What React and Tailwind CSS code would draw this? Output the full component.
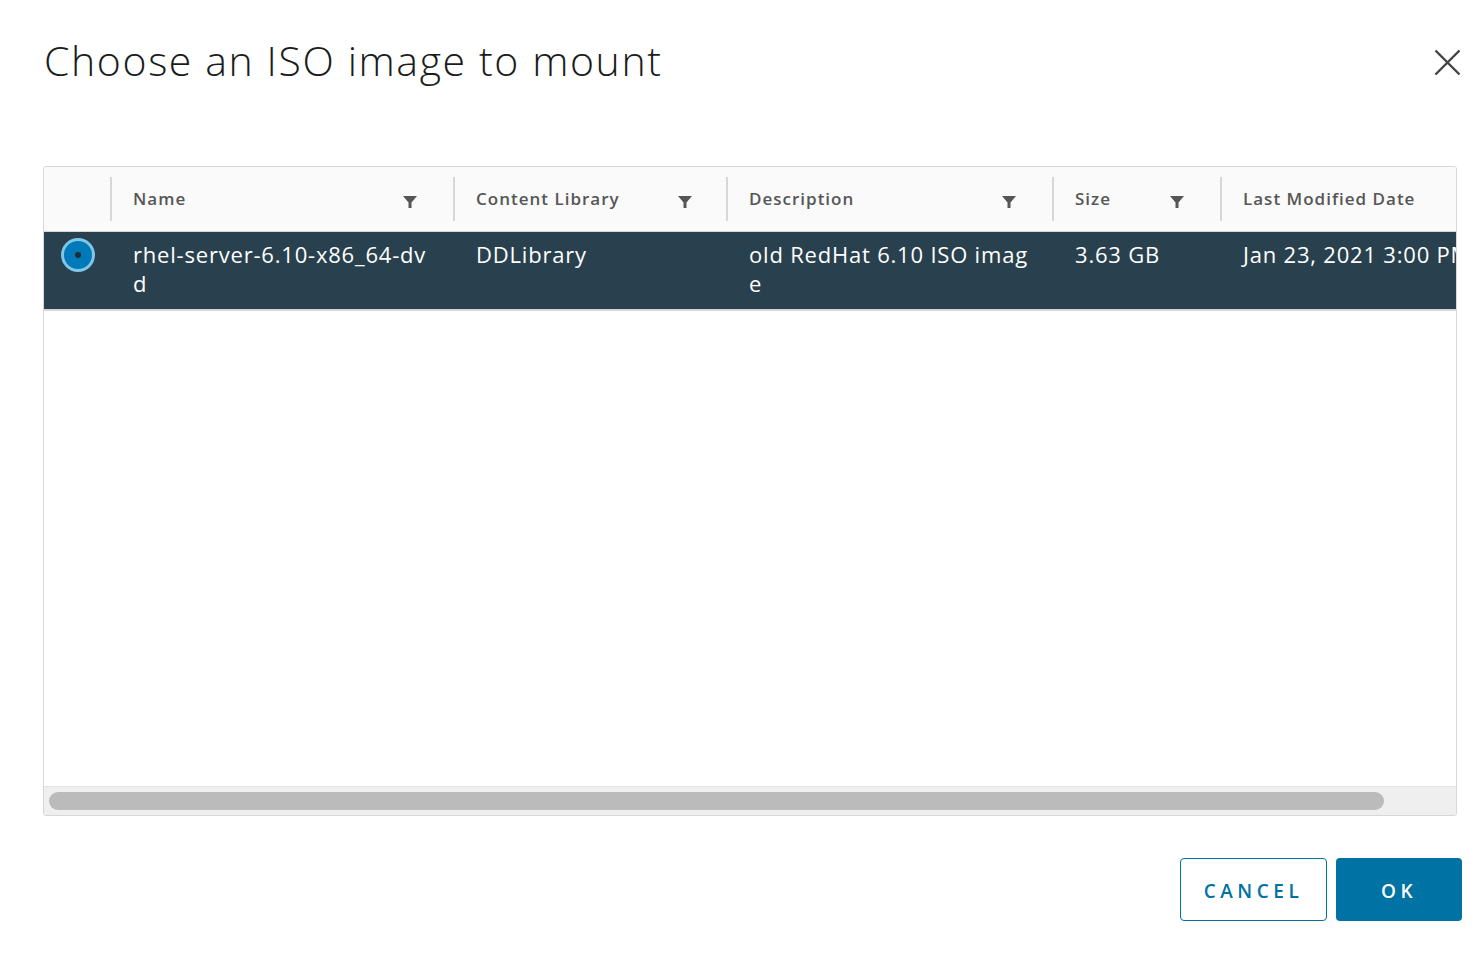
const COLS = [
  { label: "Name", w: "w-[343px]", filter: true, pr: "pr-[35px]" },
  { label: "Content Library", w: "w-[273px]", filter: true, pr: "pr-[33px]" },
  { label: "Description", w: "w-[326px]", filter: true, pr: "pr-[35px]" },
  { label: "Size", w: "w-[168px]", filter: true, pr: "pr-[35px]" },
  { label: "Last Modified Date", w: "w-[300px]", filter: false, pr: "pr-[20px]" },
]

const ROW = [
  "rhel-server-6.10-x86_64-dvd",
  "DDLibrary",
  "old RedHat 6.10 ISO image",
  "3.63 GB",
  "Jan 23, 2021 3:00 PM",
]

function FilterIcon() {
  return (
    <svg width="16" height="16" viewBox="0 0 16 16" className="shrink-0 mt-[5px]">
      <path d="M1 2 H15 L9.5 8.5 V14 H6.5 V8.5 Z" fill="#565656" />
    </svg>
  )
}

function Radio() {
  return (
    <div className="w-[34px] h-[34px] rounded-full bg-[#7fc6e8] flex items-center justify-center">
      <div className="w-[28px] h-[28px] rounded-full bg-[#0079b8] flex items-center justify-center">
        <div className="w-[6px] h-[6px] rounded-full bg-[#1c2d36]" />
      </div>
    </div>
  )
}

export default function App() {
  return (
    <div
      className="w-[1473px] h-[956px] bg-white relative"
      style={{ fontFamily: "'Open Sans', 'Noto Sans', sans-serif" }}
    >
      <div className="flex items-start justify-between pl-[44px] pr-[11px] pt-[34px]">
        <h1 className="text-[41px] font-light text-[#1b1b1b] leading-[52px] tracking-[1.6px]">
          Choose an ISO image to mount
        </h1>
        <button className="mt-[15px] mr-[1px]">
          <svg width="27" height="27" viewBox="0 0 27 27">
            <path d="M1.5 1.5 L25.5 25.5 M25.5 1.5 L1.5 25.5" stroke="#444" strokeWidth="2.4" />
          </svg>
        </button>
      </div>

      <div className="ml-[43px] mt-[80px] w-[1414px] h-[650px] border border-[#d7d7d7] rounded-[3px] flex flex-col overflow-hidden">
        <div className="flex-1 overflow-hidden">
          <div className="w-[1500px]">
            <div className="flex h-[65px] bg-[#fafafa] border-b border-[#d7d7d7]">
              <div className="w-[66px] shrink-0" />
              {COLS.map((c) => (
                <div key={c.label} className={`${c.w} shrink-0 flex items-center`}>
                  <div className="w-[2px] h-[44px] bg-[#d7d7d7] shrink-0" />
                  <div className={`flex-1 flex items-center justify-between pl-[21px] ${c.pr}`}>
                    <span className="text-[17px] font-semibold text-[#565656] tracking-[1px]">{c.label}</span>
                    {c.filter && <FilterIcon />}
                  </div>
                </div>
              ))}
            </div>
            <div className="flex h-[79px] bg-[#29414e] border-b-2 border-[#d7d7d7] text-white">
              <div className="w-[66px] shrink-0 pl-[17px] pt-[6px]">
                <Radio />
              </div>
              {ROW.map((v, i) => (
                <div key={i} className={`${COLS[i].w} shrink-0 pl-[23px] pr-[24px] pt-[8px]`}>
                  <div className="text-[22px] leading-[29px] tracking-[0.8px] break-all">{v}</div>
                </div>
              ))}
            </div>
          </div>
        </div>
        <div className="h-[29px] bg-[#efefef] border-t border-[#e3e3e3] px-[5px] flex items-center">
          <div className="w-[1335px] h-[18px] rounded-full bg-[#bbbbbb]" />
        </div>
      </div>

      <div className="flex justify-end gap-[9px] pr-[11px] mt-[42px]">
        <button className="w-[147px] h-[63px] border border-[#0072a3] rounded-[4px] text-[#0072a3] text-[19px] font-semibold tracking-[4.5px] pt-[3px]">
          CANCEL
        </button>
        <button className="w-[126px] h-[63px] bg-[#0072a3] rounded-[4px] text-white text-[19px] font-semibold tracking-[4.5px] pt-[3px]">
          OK
        </button>
      </div>
    </div>
  )
}
